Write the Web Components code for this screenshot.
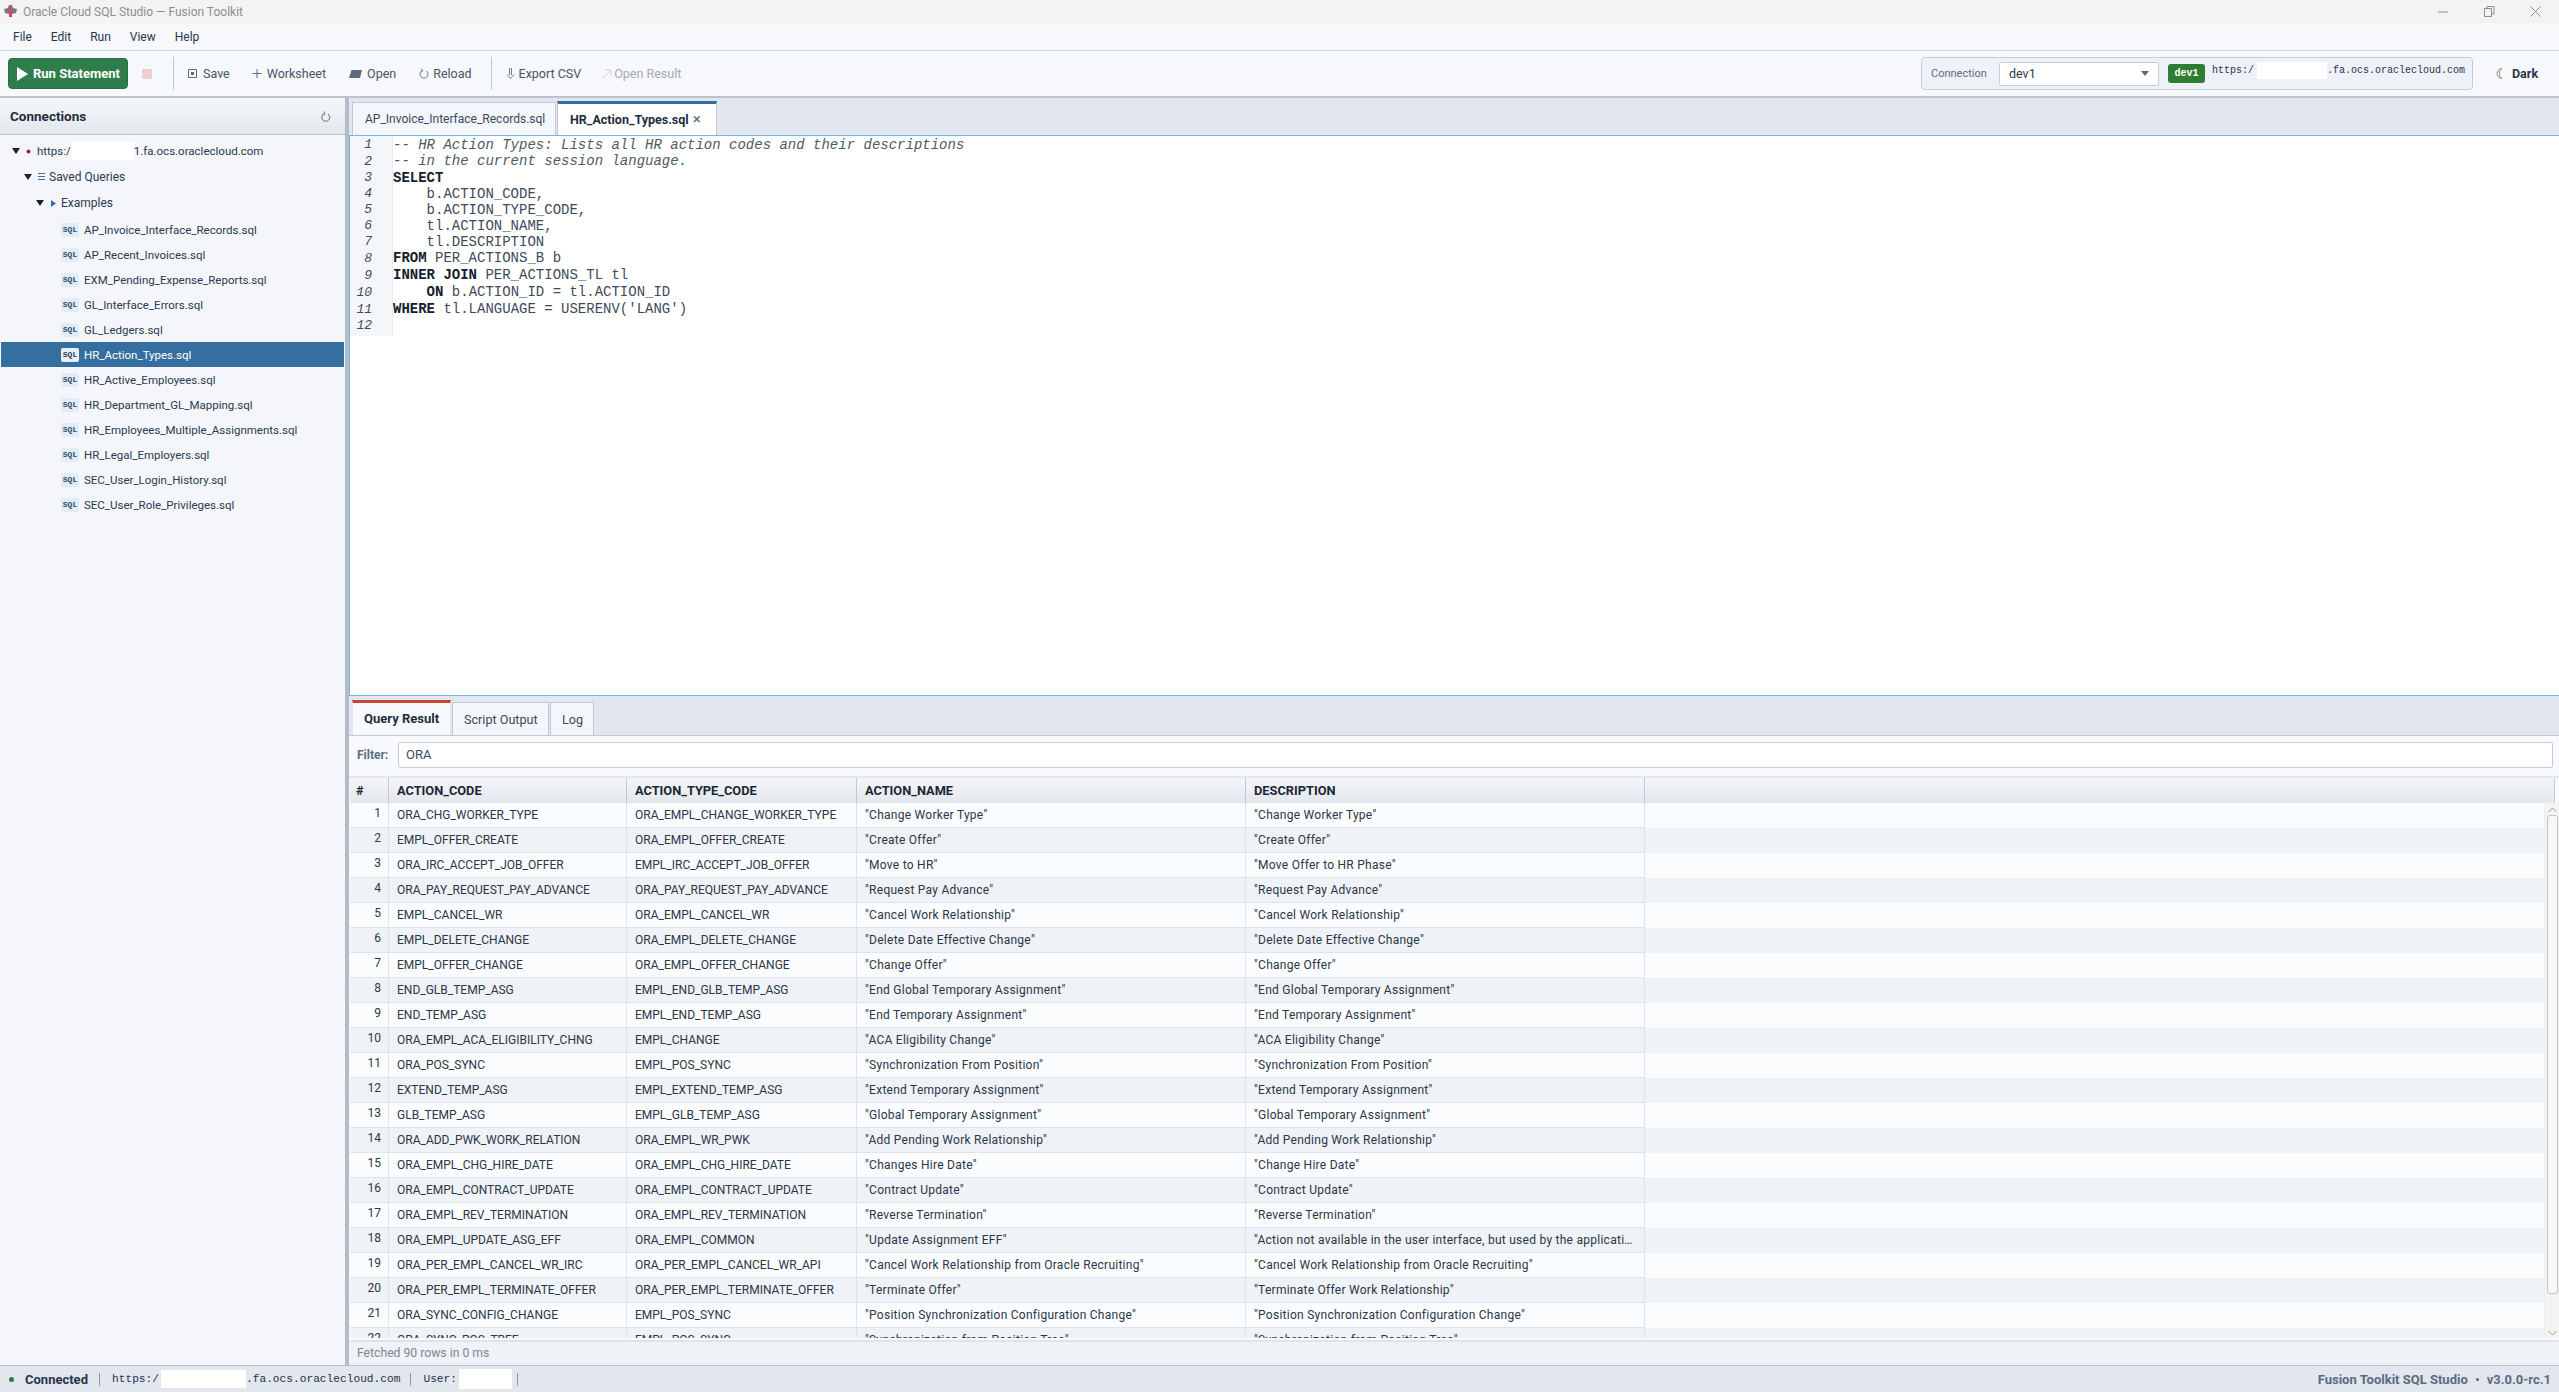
<!DOCTYPE html>
<html lang="en"><head><meta charset="utf-8"><title>Oracle Cloud SQL Studio — Fusion Toolkit</title>
<style>
html,body{margin:0;height:100%;overflow:hidden}
body{font-family:Roboto,"Noto Sans",sans-serif;font-size:12px;color:#1f2d3d;background:#f4f6fb}
</style></head><body>
<fs-app></fs-app>
<script>
function def(name,css,html,init){
  customElements.define(name,class extends HTMLElement{
    connectedCallback(){
      if(this.shadowRoot)return;
      const r=this.attachShadow({mode:'open'});
      r.innerHTML='<style>'+css+'</style>'+(typeof html==='function'?html(this):html);
      if(init)init(r,this);
    }
  });
}
const white=(w,h,ml)=>`<span class="redact" style="width:${w}px;height:${h}px;margin-left:${ml||0}px"></span>`;

def('fs-titlebar',`:host{display:flex;align-items:center;height:23px;background:#f3f3f3;color:#8a8f96;font-size:12px;flex:none}
svg{display:block;flex:none}
.logo{margin:0 5px 0 3px}
.sp{flex:1}
.wb{width:46px;display:flex;justify-content:center}
`,`<svg class="logo" width="15" height="15" viewBox="0 0 15 15"><path d="M1 5l4-1 1-3h3l1 3 4 1-1 4-4 1v3H6v-3L2 9z" fill="#6d7b92"/><path d="M6 2h3v11H6z" fill="#d94a5a"/></svg>
<span>Oracle Cloud SQL Studio — Fusion Toolkit</span><span class="sp"></span>
<span class="wb"><svg width="11" height="11"><path d="M0 6h10" stroke="#8c8c8c"/></svg></span>
<span class="wb"><svg width="11" height="11"><path d="M.5 2.5h7v8h-7zM3 2.500V.5h7v7.500H8" fill="none" stroke="#8c8c8c"/></svg></span>
<span class="wb" style="margin-right:1px"><svg width="11" height="11"><path d="M.5.500l10 10M10.500.5l-10 10" stroke="#8c8c8c"/></svg></span>`);

def('fs-menubar',`:host{display:flex;align-items:center;gap:19px;height:27px;padding:0 13px;background:#f6f8fb;border-bottom:1px solid #cfd6df;flex:none;font-size:12px;color:#27364a}`,
`<span>File</span><span>Edit</span><span>Run</span><span>View</span><span>Help</span>`);

def('fs-toolbar',`:host{display:flex;align-items:center;height:45px;padding:0 19px 0 8px;background:#f6f8fb;border-bottom:2px solid #bcc3cd;flex:none;font-size:12.500px;color:#46566c}
.run{display:flex;align-items:center;gap:5px;width:120px;height:31px;box-sizing:border-box;padding-left:8px;background:#2f7d4a;border:1px solid #2a6f42;border-radius:4px;color:#fff;font-weight:700;font-size:13px;white-space:nowrap;flex:none}
.stop{width:10px;height:10px;background:#eccfd2;margin:0 21px 0 14px;flex:none}
.sep{width:1px;height:33px;background:#c3c9d2;flex:none}
.b{display:flex;align-items:center;white-space:nowrap;flex:none}
.dis{color:#a3aab5}
svg{display:block;flex:none}
.sp{flex:1}
.conn{display:flex;align-items:center;width:552px;height:33px;box-sizing:border-box;background:#eef1f7;border:1px solid #c7ced9;border-radius:4px;padding-left:9px;flex:none}
.conn .l{font-size:11px;color:#5c6d86;width:68px;flex:none;white-space:nowrap}
.sel{display:flex;align-items:center;justify-content:space-between;width:160px;height:24px;box-sizing:border-box;background:#fff;border:1px solid #c7ced9;border-radius:2px;padding:0 9px;color:#2c3a4d;flex:none}
.sel i{border:4px solid transparent;border-top:5px solid #666;border-bottom:0}
.badge{margin-left:9px;width:37px;height:19px;background:#2e7d32;color:#fff;border-radius:3px;font:700 10px "Liberation Mono",monospace;display:flex;align-items:center;justify-content:center;flex:none}
.url{margin-left:7px;font:10px "Liberation Mono",monospace;color:#27364a;display:flex;align-items:center;height:18px;margin-top:-7px;white-space:nowrap}
.redact{display:inline-block;background:#fff}
.dark{display:flex;align-items:center;margin-left:23px;width:44px;font-weight:700;color:#27364a;white-space:nowrap;flex:none}
`,`<span class="run"><svg width="11" height="14"><path d="M0 0l11 7-11 7z" fill="#fff"/></svg>Run Statement</span><span class="stop"></span><span class="sep"></span>
<span class="b" style="margin-left:14px"><svg width="9" height="11" viewBox="0 0 9 11" style="margin-right:6px"><path d="M.5 1.500h8v8h-8z" fill="none" stroke="#5d6a7c"/><path d="M3 4h3v3H3z" fill="#5d6a7c"/></svg>Save</span>
<span class="b" style="margin-left:22px"><svg width="10" height="11" style="margin-right:5px"><path d="M5 1v9M.5 5.500h9" stroke="#5d6a7c"/></svg>Worksheet</span>
<span class="b" style="margin-left:23px"><svg width="13" height="10" style="margin-right:5px"><path d="M2.500 1H13l-2 8H0z" fill="#5d6a7c"/></svg>Open</span>
<span class="b" style="margin-left:23px"><svg width="10" height="11" viewBox="0 0 10 11" style="margin-right:4px"><path d="M7.500 3A4 4 0 1 1 3 2.600" fill="none" stroke="#717d8d"/><path d="M2 .5l2 2-2 1.500" fill="none" stroke="#717d8d"/></svg>Reload</span>
<span class="sep" style="margin-left:19px"></span>
<span class="b" style="margin-left:14px"><svg width="9" height="13" style="margin-right:4px"><path d="M3.500 1v7M5.500 1v7M1 7.500l3.500 4 3.500-4" fill="none" stroke="#717d8d"/></svg>Export CSV</span>
<span class="b dis" style="margin-left:21px"><svg width="10" height="11" style="margin-right:2px"><path d="M1 10l7-7M3 2h6v6" fill="none" stroke="#cfd3d9"/></svg>Open Result</span>
<span class="sp"></span>
<span class="conn"><span class="l">Connection</span><span class="sel">dev1<i></i></span><span class="badge">dev1</span><span class="url">https:/${white(70,17,3)}.fa.ocs.oraclecloud.com</span></span>
<span class="dark"><svg width="8" height="13" style="margin-right:8px"><path d="M6 1.500a5 5 0 0 0 0 10 6 6 0 0 1 0-10z" fill="none" stroke="#8c8f78"/></svg>Dark</span>`);

def('fs-tree-row',`:host{display:flex;align-items:center;height:25px;white-space:nowrap;color:#2a3a50;font-size:11.500px;margin:0 1px 0 1px}
:host([selected]){background:#356f9f;color:#fff}
.badge{display:inline-flex;align-items:center;justify-content:center;width:18px;height:14px;margin:0 5px 0 60px;border-radius:2px;background:#e1ecf6;color:#2c4a66;font:700 8px "Liberation Mono",monospace;flex:none}
:host([selected]) .badge{background:#e8f0f7;color:#1f3d5a}
`,`<span class="badge">SQL</span><slot></slot>`);

def('fs-sidebar',`:host{display:flex;flex-direction:column;width:345px;flex:none;background:#f4f6fb;border-right:4px solid #b4bcc8;overflow:hidden}
.h{display:flex;align-items:center;justify-content:space-between;height:37px;box-sizing:border-box;padding:0 14px 0 10px;background:linear-gradient(#f5f7fa,#e3e7ed);border-bottom:1px solid #bcc3cd;font-weight:700;font-size:13.500px;color:#1f2d3d;flex:none}
.t{display:flex;flex-direction:column;padding-top:3px}
.n{display:flex;align-items:center;white-space:nowrap;color:#2a3a50;box-sizing:border-box}
.a{width:0;height:0;border:4px solid transparent;border-top:6px solid #1c232c;border-bottom:0;flex:none}
.redact{display:inline-block;background:#fff;width:63px;height:18px}
.u{font-size:11.500px}
`,`<div class="h"><span>Connections</span><svg width="11" height="11"><path d="M3.500 3A4 4 0 1 0 8 3M3.500 .5l1.500 2.500-2.500 1" fill="none" stroke="#636e7c"/></svg></div>
<div class="t">
<div class="n" style="height:26px;padding-left:12px"><span class="a"></span><svg width="5" height="5" style="margin:0 6px 0 6px"><circle cx="2.500" cy="2.500" r="2" fill="#b01e2e"/></svg><span class="u">https:/</span><span class="redact"></span><span class="u">1.fa.ocs.oraclecloud.com</span></div>
<div class="n" style="height:27px;padding:0 0 2px 24px"><span class="a"></span><svg width="7" height="7" style="margin:0 4px 0 6px"><path d="M0 .5h7M0 3.500h7M0 6.500h7" stroke="#356f9f"/></svg><span>Saved Queries</span></div>
<div class="n" style="height:26px;padding:0 0 2px 36px"><span class="a"></span><svg width="5" height="7" style="margin:0 5px 0 7px"><path d="M0 0l5 3.500-5 3.500z" fill="#356f9f"/></svg><span>Examples</span></div>
<fs-tree-row>AP_Invoice_Interface_Records.sql</fs-tree-row>
<fs-tree-row>AP_Recent_Invoices.sql</fs-tree-row>
<fs-tree-row>EXM_Pending_Expense_Reports.sql</fs-tree-row>
<fs-tree-row>GL_Interface_Errors.sql</fs-tree-row>
<fs-tree-row>GL_Ledgers.sql</fs-tree-row>
<fs-tree-row selected>HR_Action_Types.sql</fs-tree-row>
<fs-tree-row>HR_Active_Employees.sql</fs-tree-row>
<fs-tree-row>HR_Department_GL_Mapping.sql</fs-tree-row>
<fs-tree-row>HR_Employees_Multiple_Assignments.sql</fs-tree-row>
<fs-tree-row>HR_Legal_Employers.sql</fs-tree-row>
<fs-tree-row>SEC_User_Login_History.sql</fs-tree-row>
<fs-tree-row>SEC_User_Role_Privileges.sql</fs-tree-row>
</div>`);

const code=[
[16,'<i>-- HR Action Types: Lists all HR action codes and their descriptions</i>'],
[17,'<i>-- in the current session language.</i>'],
[16,'<b>SELECT</b>'],
[16,'    b.ACTION_CODE,'],
[16,'    b.ACTION_TYPE_CODE,'],
[16,'    tl.ACTION_NAME,'],
[16,'    tl.DESCRIPTION'],
[17,'<b>FROM</b> PER_ACTIONS_B b'],
[17,'<b>INNER JOIN</b> PER_ACTIONS_TL tl'],
[17,'    <b>ON</b> b.ACTION_ID = tl.ACTION_ID'],
[17,"<b>WHERE</b> tl.LANGUAGE = USERENV('LANG')"],
[16,' ']];

def('fs-editor',`:host{display:flex;flex-direction:column;height:598px;flex:none}
.tabs{display:flex;align-items:flex-end;height:37px;box-sizing:border-box;padding-left:3px;background:#e2e6ef;flex:none;gap:1px}
.tab{display:flex;align-items:center;height:33px;box-sizing:border-box;padding-left:12px;background:#f3f6fa;border:1px solid #c3cad5;border-bottom:0;width:204px;color:#3a4a5f;white-space:nowrap}
.tab.on{height:34px;width:160px;background:#fff;border:1px solid #c3cad5;border-top:3px solid #356f9f;border-bottom:0;font-weight:700;font-size:12.500px;color:#1f2d3d}
.tab b{font-weight:400;font-size:15px;margin-left:4px;color:#5d6a7c;line-height:1}
.ed{flex:1;display:flex;background:#fff;border:1px solid #79b3e2;border-right:0;align-items:flex-start;min-height:0}
.g{width:43px;flex:none;background:#f4f6fa;border-right:1px solid #e8ebf0;text-align:right;box-sizing:border-box;padding:1px 20px 2px 0;font:italic 13px "Liberation Mono",monospace;color:#3f4c5c}
.c{font:14px "Liberation Mono",monospace;color:#3e4a59;padding-top:1px;white-space:pre}
.c i{color:#4e5966}
.c b{color:#15202c}
`,`<div class="tabs"><span class="tab">AP_Invoice_Interface_Records.sql</span><span class="tab on">HR_Action_Types.sql<b>×</b></span></div>
<div class="ed"><div class="g">${code.map((l,i)=>`<div style="height:${l[0]}px;line-height:${l[0]}px">${i+1}</div>`).join('')}</div><div class="c">${code.map(l=>`<div style="height:${l[0]}px;line-height:${l[0]}px">${l[1]}</div>`).join('')}</div></div>`);

const rows=[
['ORA_CHG_WORKER_TYPE','ORA_EMPL_CHANGE_WORKER_TYPE','Change Worker Type','Change Worker Type'],
['EMPL_OFFER_CREATE','ORA_EMPL_OFFER_CREATE','Create Offer','Create Offer'],
['ORA_IRC_ACCEPT_JOB_OFFER','EMPL_IRC_ACCEPT_JOB_OFFER','Move to HR','Move Offer to HR Phase'],
['ORA_PAY_REQUEST_PAY_ADVANCE','ORA_PAY_REQUEST_PAY_ADVANCE','Request Pay Advance','Request Pay Advance'],
['EMPL_CANCEL_WR','ORA_EMPL_CANCEL_WR','Cancel Work Relationship','Cancel Work Relationship'],
['EMPL_DELETE_CHANGE','ORA_EMPL_DELETE_CHANGE','Delete Date Effective Change','Delete Date Effective Change'],
['EMPL_OFFER_CHANGE','ORA_EMPL_OFFER_CHANGE','Change Offer','Change Offer'],
['END_GLB_TEMP_ASG','EMPL_END_GLB_TEMP_ASG','End Global Temporary Assignment','End Global Temporary Assignment'],
['END_TEMP_ASG','EMPL_END_TEMP_ASG','End Temporary Assignment','End Temporary Assignment'],
['ORA_EMPL_ACA_ELIGIBILITY_CHNG','EMPL_CHANGE','ACA Eligibility Change','ACA Eligibility Change'],
['ORA_POS_SYNC','EMPL_POS_SYNC','Synchronization From Position','Synchronization From Position'],
['EXTEND_TEMP_ASG','EMPL_EXTEND_TEMP_ASG','Extend Temporary Assignment','Extend Temporary Assignment'],
['GLB_TEMP_ASG','EMPL_GLB_TEMP_ASG','Global Temporary Assignment','Global Temporary Assignment'],
['ORA_ADD_PWK_WORK_RELATION','ORA_EMPL_WR_PWK','Add Pending Work Relationship','Add Pending Work Relationship'],
['ORA_EMPL_CHG_HIRE_DATE','ORA_EMPL_CHG_HIRE_DATE','Changes Hire Date','Change Hire Date'],
['ORA_EMPL_CONTRACT_UPDATE','ORA_EMPL_CONTRACT_UPDATE','Contract Update','Contract Update'],
['ORA_EMPL_REV_TERMINATION','ORA_EMPL_REV_TERMINATION','Reverse Termination','Reverse Termination'],
['ORA_EMPL_UPDATE_ASG_EFF','ORA_EMPL_COMMON','Update Assignment EFF','Action not available in the user interface, but used by the application to record changes'],
['ORA_PER_EMPL_CANCEL_WR_IRC','ORA_PER_EMPL_CANCEL_WR_API','Cancel Work Relationship from Oracle Recruiting','Cancel Work Relationship from Oracle Recruiting'],
['ORA_PER_EMPL_TERMINATE_OFFER','ORA_PER_EMPL_TERMINATE_OFFER','Terminate Offer','Terminate Offer Work Relationship'],
['ORA_SYNC_CONFIG_CHANGE','EMPL_POS_SYNC','Position Synchronization Configuration Change','Position Synchronization Configuration Change'],
['ORA_SYNC_POS_TREE','EMPL_POS_SYNC','Synchronization from Position Tree','Synchronization from Position Tree']];

def('fs-grid',`:host{display:flex;flex-direction:column;flex:1;min-height:0;overflow:hidden;padding-left:1px;font-size:12px}
.r{display:grid;grid-template-columns:39px 238px 230px 389px 399px 1fr;height:25px;flex:none}
.r>span{display:block;box-sizing:border-box;padding:0 8px;line-height:24px;white-space:nowrap;overflow:hidden;text-overflow:ellipsis;border-right:1px solid #dfe4ec;border-bottom:1px solid #dfe4ec;color:#2a3746}
.r>span.n{text-align:right;padding:0 7px 0 0;line-height:20px}
.r>span.q{letter-spacing:.26px}
.r>span:last-child{border:0}
.r.alt{background:#eff2f7}.r.odd{background:#fbfcfe}
.head{width:calc(100% - 4px);background:linear-gradient(#f3f5f9,#e4e7ee);border-right:1px solid #c7ced9;box-sizing:border-box;font-size:12.800px}
.head>span{font-weight:700;border-right:1px solid #c3c9d3;border-bottom:0;color:#1b2735;line-height:25px}
.head>span.n{text-align:left;padding-left:6px;line-height:25px}
.body{flex:1;min-height:0;display:flex;overflow:hidden}
.list{flex:1;min-width:0;overflow:hidden}
.sb{width:15px;flex:none;background:#f3f3f3;display:flex;flex-direction:column;align-items:center;border-left:1px solid #eceef1;box-sizing:border-box}
.thumb{width:11px;height:479px;margin-top:2px;background:#f7f7f7;border:1px solid #c4c4c4;border-radius:3px;box-sizing:border-box;flex:none}
svg{display:block;margin-top:4px;flex:none}
.sp{flex:1}
`,()=>`<div class="r head"><span class="n">#</span><span>ACTION_CODE</span><span>ACTION_TYPE_CODE</span><span>ACTION_NAME</span><span>DESCRIPTION</span><span></span></div>
<div class="body"><div class="list">${rows.map((r,i)=>`<div class="r ${i%2?'alt':'odd'}"><span class="n">${i+1}</span><span>${r[0]}</span><span>${r[1]}</span><span class="q">"${r[2]}"</span><span class="q">"${r[3]}"</span><span></span></div>`).join('')}</div>
<div class="sb"><svg width="9" height="6"><path d="M.5 5L4.500 1l4 4" fill="none" stroke="#9a9a9a"/></svg><div class="thumb"></div><span class="sp"></span><svg width="9" height="6" style="margin:0 0 2px"><path d="M.5 1l4 4 4-4" fill="none" stroke="#9a9a9a"/></svg></div></div>`);

def('fs-results',`:host{display:flex;flex-direction:column;flex:1;min-height:0;background:#f9fafd}
.tabs{display:flex;align-items:flex-end;height:40px;box-sizing:border-box;padding-left:3px;gap:1px;background:#e2e6ef;border-bottom:1px solid #c3cad5;flex:none;font-size:12.600px}
.tab{display:flex;align-items:center;height:33px;box-sizing:border-box;padding:0 0 0 11px;background:#f3f6fa;border:1px solid #c3cad5;border-bottom:0;color:#3a4a5f;white-space:nowrap;width:97px}
.tab.log{width:44px;padding-left:11px}
.tab.on{height:35px;width:99px;padding:0 0 2px 11px;background:#f7f9fc;border:1px solid #dfe3ea;border-top:3px solid #c74634;border-bottom:0;font-weight:700;font-size:13px;color:#1f2d3d}
.f{display:flex;align-items:center;box-sizing:border-box;padding:6px 6px 8px 8px;border-bottom:2px solid #e4e8ee;flex:none}
.f label{font-weight:700;color:#5c6d86;width:41px;flex:none}
.f div{flex:1;height:26px;box-sizing:border-box;background:#fff;border:1px solid #c7ced9;border-radius:2px;padding:0 7px;line-height:24px;color:#3a4a5f;font-size:13px}
.s{height:25px;margin-top:2px;flex:none;box-sizing:border-box;background:#eff2f7;border-top:2px solid #e0e4ea;color:#7c8796;font-size:12.200px;padding-left:8px;line-height:22px}
`,`<div class="tabs"><span class="tab on">Query Result</span><span class="tab">Script Output</span><span class="tab log">Log</span></div>
<div class="f"><label>Filter:</label><div>ORA</div></div>
<fs-grid></fs-grid>
<div class="s">Fetched 90 rows in 0 ms</div>`);

def('fs-statusbar',`:host{display:flex;align-items:center;height:27px;flex:none;box-sizing:border-box;background:#e2e6ef;border-top:1px solid #bcc3cd;padding:0 8px 0 9px;font-size:13px;color:#26344a;white-space:nowrap}
.d{width:5px;height:5px;border-radius:50%;background:#2f7d4a;margin-right:11px;flex:none}
.m{font:11.200px "Liberation Mono",monospace;display:flex;align-items:center}
.bar{width:1px;height:13px;background:#8f98a5;flex:none;margin:0 12px 0 12px}
.redact{display:inline-block;background:#fff}
.sp{flex:1}
.r{font-weight:700;color:#5c6a80;display:flex;align-items:center}
.r i{width:3px;height:3px;border-radius:50%;background:#5c6a80;margin:0 8px}
b{width:62px;flex:none;overflow:visible}
`,`<span class="d"></span><b>Connected</b><span class="bar"></span><span class="m">https:/${white(85,18,2)}.fa.ocs.oraclecloud.com</span><span class="bar" style="margin-left:10px"></span><span class="m">User:${white(53,20,2)}</span><span class="bar" style="margin-left:5px"></span><span class="sp"></span><span class="r">Fusion Toolkit SQL Studio<i></i>v3.0.0-rc.1</span>`);

def('fs-app',`:host{display:flex;flex-direction:column;height:100vh;overflow:hidden}
.main{flex:1;min-height:0;display:flex}
.right{flex:1;min-width:0;display:flex;flex-direction:column;background:#fff}
`,`<fs-titlebar></fs-titlebar><fs-menubar></fs-menubar><fs-toolbar></fs-toolbar>
<div class="main"><fs-sidebar></fs-sidebar><div class="right"><fs-editor></fs-editor><fs-results></fs-results></div></div>
<fs-statusbar></fs-statusbar>`);
</script>
</body></html>
